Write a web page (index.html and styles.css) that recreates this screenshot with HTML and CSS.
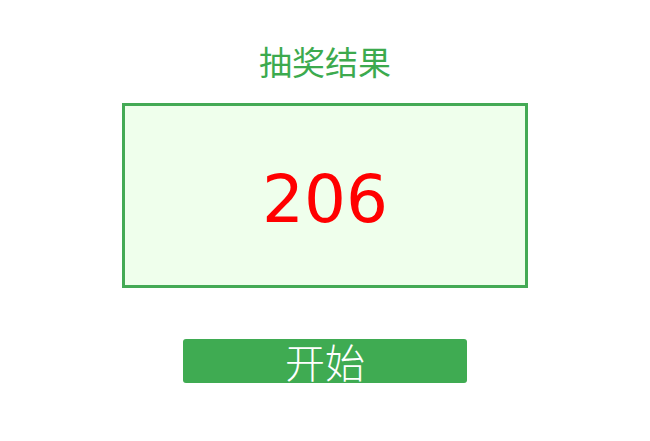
FILE: index.html
```html
<!DOCTYPE html>
<html lang="zh">
<head>
<meta charset="utf-8">
<title>抽奖结果</title>
<link rel="stylesheet" href="styles.css">
</head>
<body>
<main class="page">
  <h1 class="title">抽奖结果</h1>
  <div class="result"><span class="number">206</span></div>
  <button class="start">开始</button>
</main>
</body>
</html>
```

FILE: styles.css
```css
html, body {
  margin: 0;
  padding: 0;
  background: #ffffff;
}
.page {
  display: flex;
  flex-direction: column;
  align-items: center;
  padding-top: 39px;
}
.title {
  margin: 0;
  font-family: "Noto Sans CJK SC", sans-serif;
  font-weight: 400;
  font-size: 33px;
  line-height: 44px;
  color: #3caa4e;
  height: 44px;
}
.result {
  box-sizing: border-box;
  margin-top: 20px;
  width: 406px;
  height: 185px;
  border: 3px solid #44aa55;
  background: #efffec;
  display: flex;
  align-items: center;
  justify-content: center;
  padding-top: 9px;
}
.number {
  font-family: "DejaVu Sans", sans-serif;
  font-size: 66px;
  color: #ff0000;
  line-height: 1;
}
.start {
  margin-top: 51px;
  width: 284px;
  height: 44px;
  border: none;
  border-radius: 3px;
  background: #3fab52;
  color: #ffffff;
  font-family: "Noto Sans CJK SC", sans-serif;
  font-weight: 300;
  font-size: 40px;
  line-height: 44px;
  padding: 0;
}
```
